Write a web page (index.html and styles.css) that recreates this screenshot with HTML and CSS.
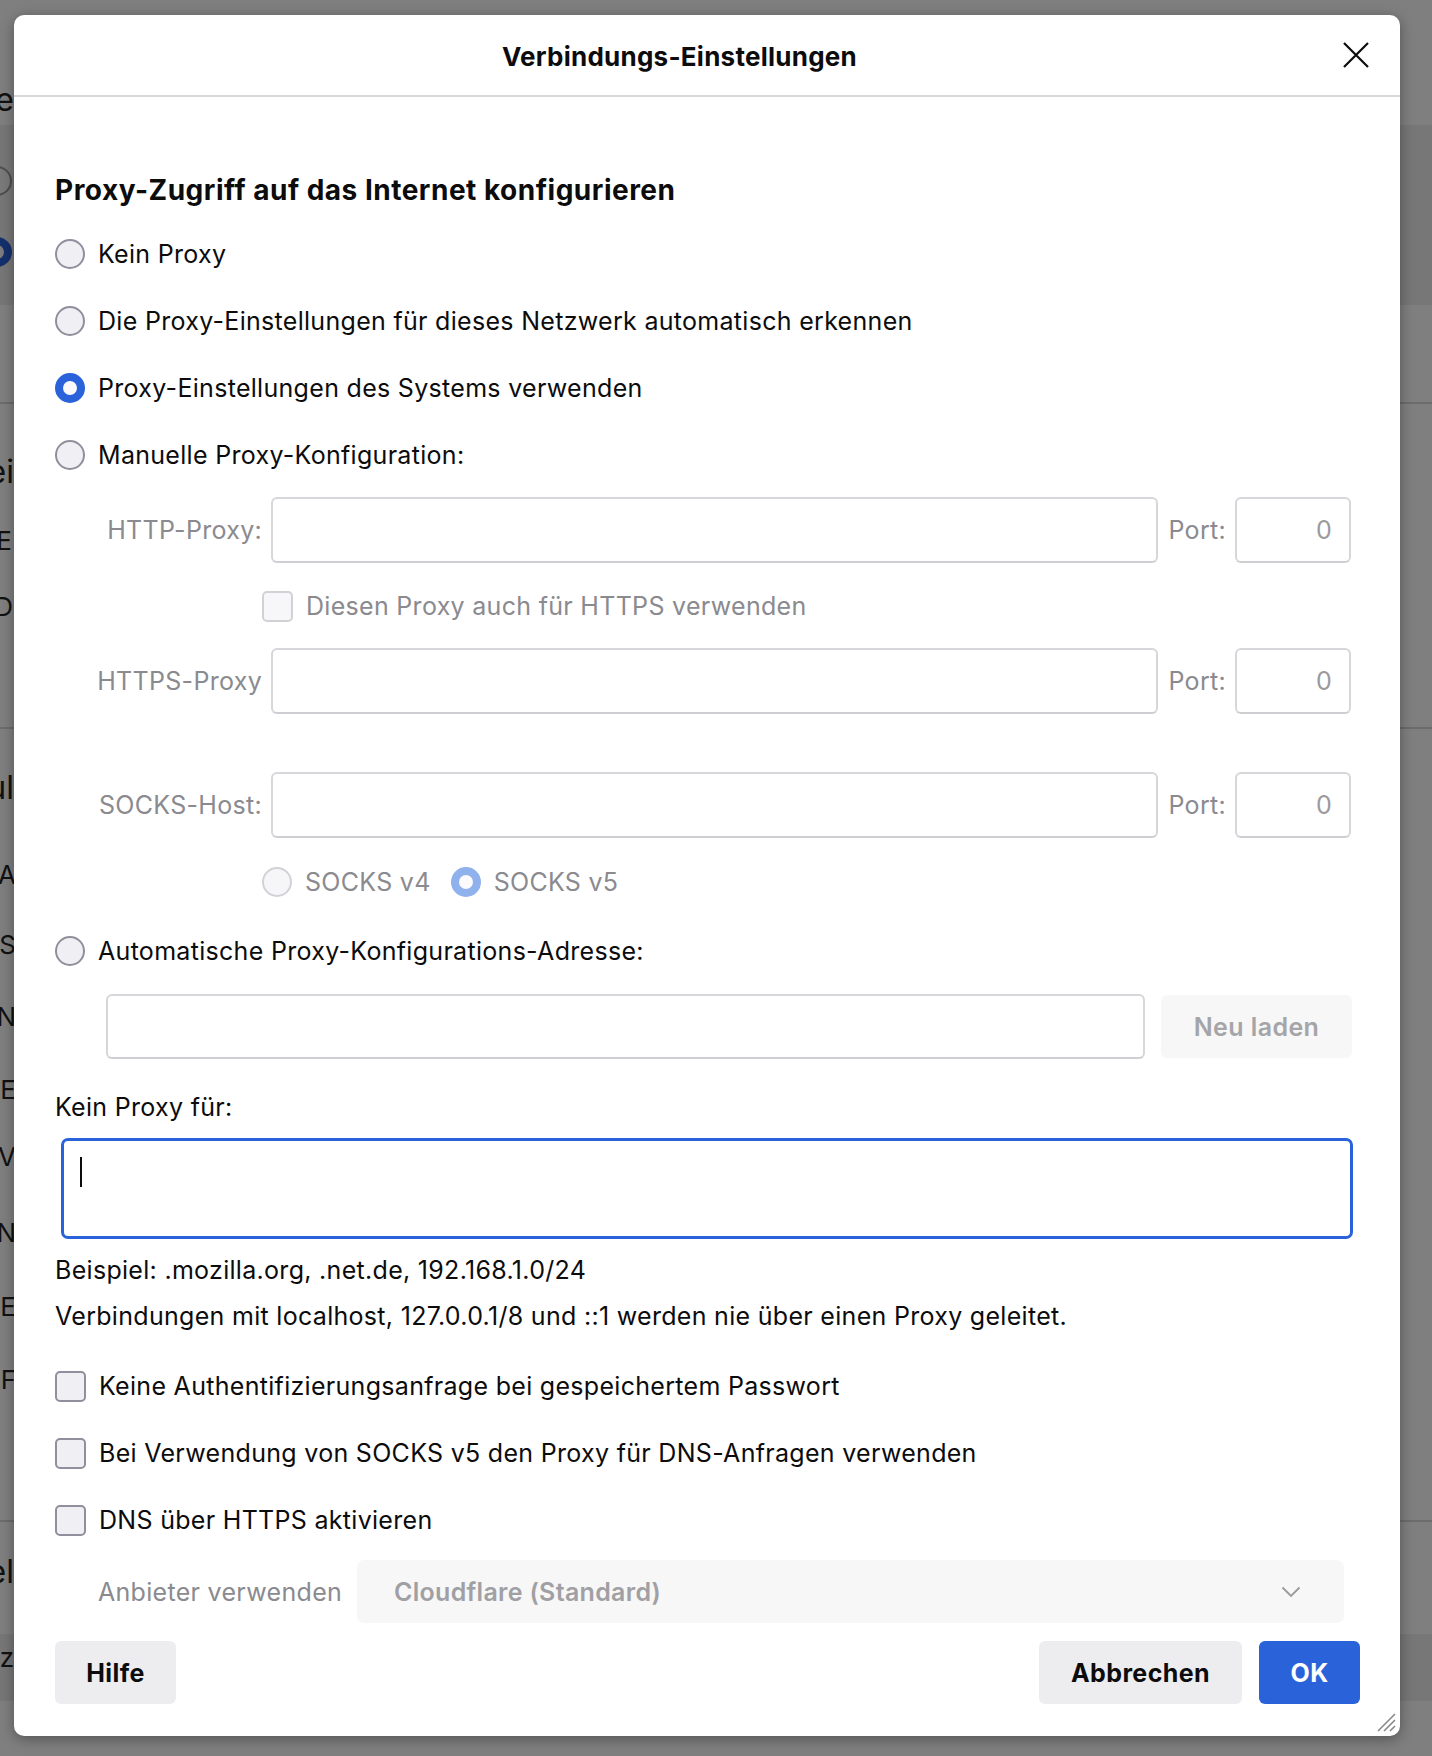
FILE: index.html
```html
<!DOCTYPE html>
<html lang="de">
<head>
  <meta charset="UTF-8" />
  <title>Verbindungs-Einstellungen</title>
  <link rel="stylesheet" href="styles.css">
</head>
<body>
  <!-- Seite hinter dem Dialog (abgedunkelt) -->
  <div class="behind">
    <div class="band band-top"></div>
    <div class="band band-bottom"></div>
    <div class="hline l1"></div>
    <div class="hline l2"></div>
    <div class="hline l3"></div>
    <span class="frag f-e">Verbindungse</span>
    <span class="bg-radio r1"></span>
    <span class="bg-radio r2"></span>
    <span class="frag f-ei">Einstellungen bei</span>
    <span class="frag small f-b">E</span>
    <span class="frag small f-d">D</span>
    <span class="frag f-ul">Zul</span>
    <span class="frag small f-a">A</span>
    <span class="frag small f-s">S</span>
    <span class="frag small f-n1">N</span>
    <span class="frag small f-e2">E</span>
    <span class="frag small f-v">V</span>
    <span class="frag small f-n2">N</span>
    <span class="frag small f-e3">E</span>
    <span class="frag small f-f">F</span>
    <span class="frag f-el">Netzwerk-Einstel</span>
    <span class="frag small f-tz">Netz</span>
  </div>

  <div class="dialog">
    <div class="dlg-head">
      <h1>Verbindungs-Einstellungen</h1>
      <button class="close" aria-label="Schließen">
        <svg width="26" height="26" viewBox="0 0 26 26"><path d="M1 1L25 25M25 1L1 25" stroke="#0c0c0d" stroke-width="2.2" fill="none"/></svg>
      </button>
    </div>

    <div class="dlg-body">
      <h2>Proxy-Zugriff auf das Internet konfigurieren</h2>

      <div class="options">
        <div class="row"><span class="radio"></span>Kein Proxy</div>
        <div class="row"><span class="radio"></span>Die Proxy-Einstellungen für dieses Netzwerk automatisch erkennen</div>
        <div class="row"><span class="radio checked"></span>Proxy-Einstellungen des Systems verwenden</div>
        <div class="row"><span class="radio"></span>Manuelle Proxy-Konfiguration:</div>
      </div>

      <div class="proxy-row first">
        <span class="plabel">HTTP-Proxy:</span>
        <div class="field"></div>
        <span class="portlabel">Port:</span>
        <div class="field port">0</div>
      </div>
      <div class="row indent also">
        <span class="check disabled"></span><span class="muted">Diesen Proxy auch für HTTPS verwenden</span>
      </div>
      <div class="proxy-row https">
        <span class="plabel">HTTPS-Proxy</span>
        <div class="field"></div>
        <span class="portlabel">Port:</span>
        <div class="field port">0</div>
      </div>
      <div class="proxy-row socks">
        <span class="plabel">SOCKS-Host:</span>
        <div class="field"></div>
        <span class="portlabel">Port:</span>
        <div class="field port">0</div>
      </div>
      <div class="row indent versions">
        <span class="radio disabled"></span><span class="muted">SOCKS v4</span>
        <span class="radio disabled checked v5"></span><span class="muted">SOCKS v5</span>
      </div>

      <div class="row auto"><span class="radio"></span>Automatische Proxy-Konfigurations-Adresse:</div>
      <div class="auto-row">
        <div class="field wide"></div>
        <button class="btn reload">Neu laden</button>
      </div>

      <div class="row noproxy-label">Kein Proxy für:</div>
      <div class="textarea"><span class="caret"></span></div>
      <p class="hint first">Beispiel: .mozilla.org, .net.de, 192.168.1.0/24</p>
      <p class="hint">Verbindungen mit localhost, 127.0.0.1/8 und ::1 werden nie über einen Proxy geleitet.</p>

      <div class="checks">
        <div class="row"><span class="check"></span>Keine Authentifizierungsanfrage bei gespeichertem Passwort</div>
        <div class="row"><span class="check"></span>Bei Verwendung von SOCKS v5 den Proxy für DNS-Anfragen verwenden</div>
        <div class="row"><span class="check"></span>DNS über HTTPS aktivieren</div>
      </div>

      <div class="provider">
        <span class="muted provider-label">Anbieter verwenden</span>
        <div class="select">
          <span>Cloudflare (Standard)</span>
          <svg width="20" height="12" viewBox="0 0 20 12"><path d="M1.5 1.5L10 10L18.5 1.5" stroke="#9a9a9a" stroke-width="1.8" fill="none"/></svg>
        </div>
      </div>

      <div class="buttons">
        <button class="btn help">Hilfe</button>
        <span class="spacer"></span>
        <button class="btn cancel">Abbrechen</button>
        <button class="btn primary">OK</button>
      </div>
    </div>

    <svg class="grip" width="22" height="22" viewBox="0 0 22 22">
      <path d="M21 4L4 21M21 10L10 21M21 16L16 21" stroke="#8a8a8a" stroke-width="1.6"/>
    </svg>
  </div>
</body>
</html>
```

FILE: styles.css
```css
* {
  box-sizing: border-box;
}
body {
  margin: 0;
  width: 1432px;
  height: 1756px;
  overflow: hidden;
  position: relative;
  background: #7f7f7f;
  font-family: Inter, "Noto Sans", sans-serif;
  font-size: 25px;
  letter-spacing: 0.3px;
  color: #0c0c0d;
}

/* abgedunkelte Seite dahinter */
.behind {
  position: absolute;
  left: 0;
  top: 0;
  width: 1432px;
  height: 1756px;
}
.band {
  position: absolute;
  left: 0;
  right: 0;
  background: #777777;
}
.band-top { top: 125px; height: 180px; }
.band-bottom { top: 1634px; height: 67px; }
.hline {
  position: absolute;
  left: 0;
  right: 0;
  height: 2px;
  background: #6c6c6c;
}
.l1 { top: 402px; }
.l2 { top: 727px; }
.l3 { top: 1520px; }
.frag {
  position: absolute;
  right: 1418px;
  font-size: 32px;
  color: #111;
  white-space: nowrap;
  line-height: 1;
  letter-spacing: 0;
}
.frag.small { font-size: 26px; }
.f-e { top: 84px; }
.f-ei { top: 456px; }
.f-b { top: 528px; right: 1420px; }
.f-d { top: 594px; right: 1419px; }
.f-ul { top: 772px; }
.f-a { top: 862px; right: 1416px; }
.f-s { top: 932px; right: 1416px; }
.f-n1 { top: 1004px; right: 1416px; }
.f-e2 { top: 1077px; right: 1416px; }
.f-v { top: 1144px; right: 1416px; }
.f-n2 { top: 1220px; right: 1416px; }
.f-e3 { top: 1294px; right: 1416px; }
.f-f { top: 1367px; right: 1416px; }
.f-el { top: 1556px; }
.f-tz { top: 1645px; }
.bg-radio {
  position: absolute;
  left: -18px;
  width: 30px;
  height: 30px;
  border-radius: 50%;
}
.r1 { top: 166px; border: 2px solid #4d4d4d; background: #7a7a7a; }
.r2 { top: 237px; border: 8px solid #14306b; background: #7c7c7c; }

/* Dialog */
.dialog {
  position: relative;
  margin: 15px 0 0 14px;
  width: 1386px;
  height: 1721px;
  background: #fff;
  border-radius: 10px;
  box-shadow: 0 3px 14px rgba(0, 0, 0, 0.35);
}
.dlg-head {
  display: flex;
  align-items: center;
  height: 82px;
  border-bottom: 2px solid #d7d7db;
}
.dlg-head h1 {
  flex: 1;
  margin: 0;
  text-align: center;
  font-size: 26px;
  font-weight: 700;
  letter-spacing: 0.25px;
  padding: 2px 0 0 4px;
}
.close {
  width: 26px;
  height: 26px;
  margin: 0 31px 0 2px;
  padding: 0;
  border: none;
  background: none;
}
.dlg-body {
  padding: 73px 41px 0 41px;
}
h2 {
  margin: 0;
  height: 40px;
  line-height: 40px;
  font-size: 28px;
  font-weight: 700;
  letter-spacing: 0.5px;
}

.row {
  display: flex;
  align-items: center;
  height: 40px;
  white-space: nowrap;
}
.options {
  display: flex;
  flex-direction: column;
  gap: 27px;
  margin-top: 24px;
}

.radio {
  flex-shrink: 0;
  width: 30px;
  height: 30px;
  margin-right: 13px;
  border-radius: 50%;
  background: #f0f0f4;
  border: 2px solid #8f8f9d;
}
.radio.checked {
  background: #f9f9fb;
  border: 8px solid #2a62d9;
}
.radio.disabled {
  background: #f6f6f8;
  border-color: #d2d2d6;
}
.radio.disabled.checked {
  background: #fbfbfd;
  border-color: #8fb1ec;
}
.check {
  flex-shrink: 0;
  width: 31px;
  height: 31px;
  margin-right: 13px;
  border-radius: 5px;
  background: #f0f0f4;
  border: 2px solid #8f8f9d;
}
.check.disabled {
  background: #f7f7f9;
  border-color: #d2d2d6;
}
.muted {
  color: #8a8a8f;
}

/* manuelle Konfiguration */
.proxy-row {
  display: flex;
  align-items: center;
  height: 66px;
  width: 1296px;
}
.proxy-row.first { margin-top: 22px; }
.proxy-row.https { margin-top: 22px; }
.proxy-row.socks { margin-top: 58px; }
.plabel {
  width: 207px;
  text-align: right;
  color: #8a8a8f;
  margin-right: 9px;
}
.field {
  flex: 1;
  height: 66px;
  border: 2px solid #d7d7db;
  border-bottom-color: #cfcfd3;
  border-radius: 6px;
  background: #fff;
}
.portlabel {
  margin: 0 9px 0 10px;
  color: #8a8a8f;
}
.field.port {
  flex: none;
  width: 116px;
  padding-right: 17px;
  text-align: right;
  line-height: 62px;
  color: #9a9a9e;
}
.indent {
  padding-left: 207px;
}
.also { margin-top: 23px; }
.versions { margin-top: 24px; }
.radio.v5 {
  margin-left: 20px;
}

.auto { margin-top: 29px; }
.auto-row {
  display: flex;
  align-items: center;
  height: 65px;
  margin-top: 23px;
  padding-left: 51px;
  width: 1297px;
}
.field.wide {
  height: 65px;
}
.btn {
  height: 63px;
  padding: 0;
  border: none;
  border-radius: 6px;
  background: #ededf0;
  font-family: inherit;
  font-size: 25px;
  font-weight: 700;
  letter-spacing: 0.4px;
  color: #0c0c0d;
}
.btn.reload {
  width: 191px;
  margin-left: 16px;
  background: #f7f7f8;
  color: #a5a5a8;
  font-weight: 600;
}
.btn.help { width: 121px; }
.btn.cancel { width: 203px; }
.btn.primary {
  background: #2a62d9;
  color: #fff;
  width: 101px;
}

.noproxy-label { margin-top: 28px; }
.textarea {
  margin: 11px 6px 0 6px;
  height: 101px;
  border: 3px solid #2a62d9;
  border-radius: 7px;
  padding: 16px 0 0 16px;
}
.caret {
  display: block;
  width: 2px;
  height: 30px;
  background: #0c0c0d;
}
.hint {
  margin: 12px 0 0;
  height: 34px;
  line-height: 34px;
  white-space: nowrap;
}
.hint.first { margin-top: 14px; }

.checks {
  display: flex;
  flex-direction: column;
  gap: 27px;
  margin-top: 33px;
}

.provider {
  display: flex;
  align-items: center;
  height: 63px;
  margin-top: 20px;
  padding-left: 43px;
}
.provider-label {
  flex-shrink: 0;
  width: 243px;
  white-space: nowrap;
}
.select {
  flex-shrink: 0;
  display: flex;
  align-items: center;
  justify-content: space-between;
  width: 987px;
  height: 63px;
  margin-left: 16px;
  padding: 0 43px 0 37px;
  border-radius: 7px;
  background: #f7f7f8;
  color: #a0a0a4;
  font-weight: 600;
  white-space: nowrap;
}

.buttons {
  display: flex;
  align-items: center;
  gap: 17px;
  margin-top: 18px;
  width: 1305px;
}
.spacer {
  flex: 1;
}

.grip {
  position: absolute;
  right: 4px;
  bottom: 4px;
}
```
